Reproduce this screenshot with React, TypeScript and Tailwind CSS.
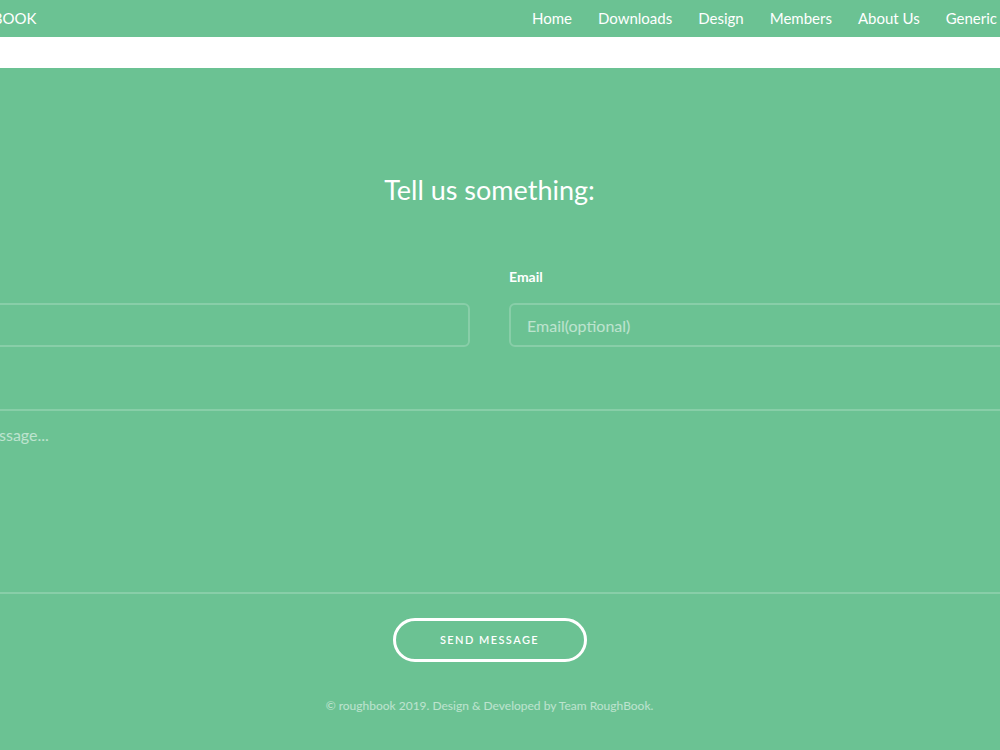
const navLinks = ["Home", "Downloads", "Design", "Members", "About Us", "Generic"]

export default function App() {
  return (
    <div
      className="min-h-[750px] overflow-hidden bg-[#6bc293] text-white"
      style={{ fontFamily: "'Source Sans Pro', Lato, 'Liberation Sans', sans-serif" }}
    >
      {/* Top bar */}
      <header className="h-[37px] bg-[#6bc293]">
        <div className="flex justify-center pr-[21px]">
          <div className="flex h-[37px] w-[1063px] shrink-0 items-center justify-between pr-[24px]">
            <a href="#" className="-ml-[20px] text-[15px] uppercase">
              RoughBook
            </a>
            <nav className="flex items-center gap-[26px] text-[15px]">
              {navLinks.map((link) => (
                <a key={link} href="#">
                  {link}
                </a>
              ))}
            </nav>
          </div>
        </div>
      </header>

      {/* white strip */}
      <div className="h-[31px] border-b border-white/40 bg-white" />

      {/* Contact form */}
      <section className="flex justify-center pr-[21px]">
        <div className="flex w-[1063px] shrink-0 flex-col">
          <h2 className="mt-[104px] text-center text-[27px] leading-[36px]">Tell us something:</h2>

          <form className="mt-[60px] flex flex-col">
            <div className="grid grid-cols-2 gap-[39px]">
              <div className="flex flex-col">
                <label className="text-[14px] font-bold leading-[18px]">Name</label>
                <input className="mt-[17px] h-[44px] rounded-[6px] border-2 border-white/20 bg-transparent px-[16px] text-[16px] outline-none" />
              </div>
              <div className="flex flex-col">
                <label className="text-[14px] font-bold leading-[18px]">Email</label>
                <input
                  placeholder="Email(optional)"
                  className="mt-[17px] h-[44px] rounded-[6px] border-2 border-white/20 bg-transparent px-[16px] text-[16px] placeholder:text-white/55 outline-none"
                />
              </div>
            </div>

            <textarea
              placeholder="Message..."
              className="mt-[62px] h-[185px] resize-none rounded-[6px] border-2 border-white/20 bg-transparent px-[16px] py-[12px] text-[16px] placeholder:text-white/55 outline-none"
            />

            <div className="mt-[24px] flex justify-center">
              <button
                type="button"
                className="h-[44px] w-[194px] rounded-full border-[3px] border-white text-[11px] font-semibold uppercase tracking-[0.13em]"
              >
                Send Message
              </button>
            </div>
          </form>

          <p className="mt-[35px] text-center text-[12px] text-white/55">
            © roughbook 2019. Design &amp; Developed by Team RoughBook.
          </p>
        </div>
      </section>
    </div>
  )
}
